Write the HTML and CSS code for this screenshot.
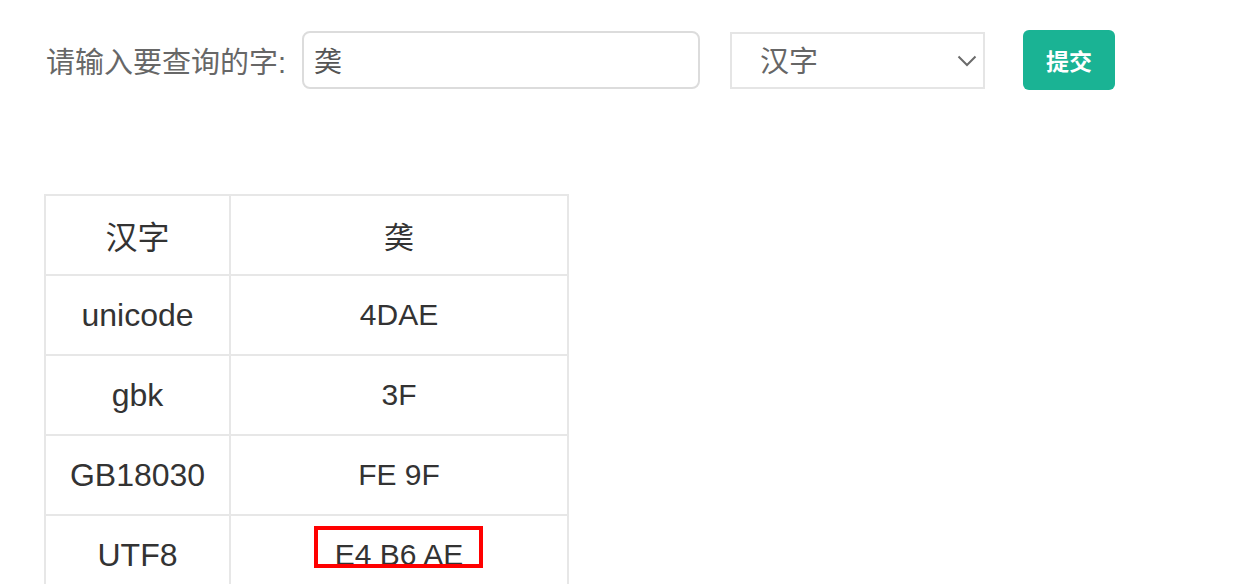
FILE: index.html
```html
<!DOCTYPE html>
<html lang="zh">
<head>
<meta charset="utf-8">
<title>字符编码查询</title>
<link rel="stylesheet" href="styles.css">
</head>
<body>
<div class="page">
  <form class="search">
    <label class="search-label" for="q">请输入要查询的字:</label>
    <input class="search-input" id="q" type="text" value="䶮">
    <div class="select-wrap">
      <select class="search-select">
        <option>汉字</option>
      </select>
      <svg class="chevron" width="20" height="12" viewBox="0 0 20 12"><polyline points="1.5,1.5 10,10 18.5,1.5" fill="none" stroke="#6b6b6b" stroke-width="2"/></svg>
    </div>
    <button class="submit" type="button">提交</button>
  </form>

  <table class="result">
    <tr><td class="key">汉字</td><td class="val">䶮</td></tr>
    <tr><td class="key">unicode</td><td class="val">4DAE</td></tr>
    <tr><td class="key">gbk</td><td class="val">3F</td></tr>
    <tr><td class="key">GB18030</td><td class="val">FE 9F</td></tr>
    <tr><td class="key">UTF8</td><td class="val mark-cell">E4 B6 AE<span class="mark"></span></td></tr>
  </table>
</div>
</body>
</html>
```

FILE: styles.css
```css
html, body {
  margin: 0;
  padding: 0;
  background: #ffffff;
}

body {
  font-family: "Liberation Sans", "Noto Sans CJK SC", sans-serif;
  color: #333333;
}

.page {
  padding: 30px 0 0 44px;
}

.search {
  display: flex;
  align-items: center;
  height: 60px;
  margin: 0;
}

.search-label {
  font-size: 29px;
  color: #676767;
  margin-left: 2px;
  margin-right: 16px;
  white-space: nowrap;
}

.search-input {
  box-sizing: border-box;
  width: 398px;
  height: 58px;
  border: 2px solid #dcdcdc;
  border-radius: 8px;
  padding: 0 10px;
  font-family: "Liberation Sans", "Noto Sans CJK SC", sans-serif;
  font-size: 28px;
  color: #555555;
  outline: none;
  margin: 0;
}

.select-wrap {
  position: relative;
  margin-left: 30px;
}

.search-select {
  box-sizing: border-box;
  width: 255px;
  height: 57px;
  border: 2px solid #e5e5e5;
  border-radius: 0;
  background: #ffffff;
  -webkit-appearance: none;
  appearance: none;
  padding: 4px 0 0 28px;
  font-family: "Liberation Sans", "Noto Sans CJK SC", sans-serif;
  font-size: 29px;
  color: #666666;
  outline: none;
  margin: 0;
  display: block;
}

.chevron {
  position: absolute;
  right: 8px;
  top: 23px;
  pointer-events: none;
}

.submit {
  margin-left: 38px;
  width: 92px;
  height: 60px;
  border: none;
  border-radius: 6px;
  background: #1ab394;
  color: #ffffff;
  font-family: "Liberation Sans", "Noto Sans CJK SC", sans-serif;
  font-size: 23px;
  font-weight: bold;
  padding: 0;
}

.result {
  margin-top: 104px;
  border-collapse: collapse;
  border: 2px solid #e7e7e7;
  color: #333333;
}

.result td {
  border: 2px solid #e7e7e7;
  height: 78px;
  padding: 0;
  text-align: center;
  vertical-align: middle;
}

.key {
  width: 183px;
  font-size: 32px;
}

.val {
  width: 336px;
  font-size: 30px;
}

.mark-cell {
  position: relative;
}

.mark {
  position: absolute;
  left: 83px;
  top: 10px;
  width: 169px;
  height: 42px;
  box-sizing: border-box;
  border: 4px solid #ff0000;
}
```
